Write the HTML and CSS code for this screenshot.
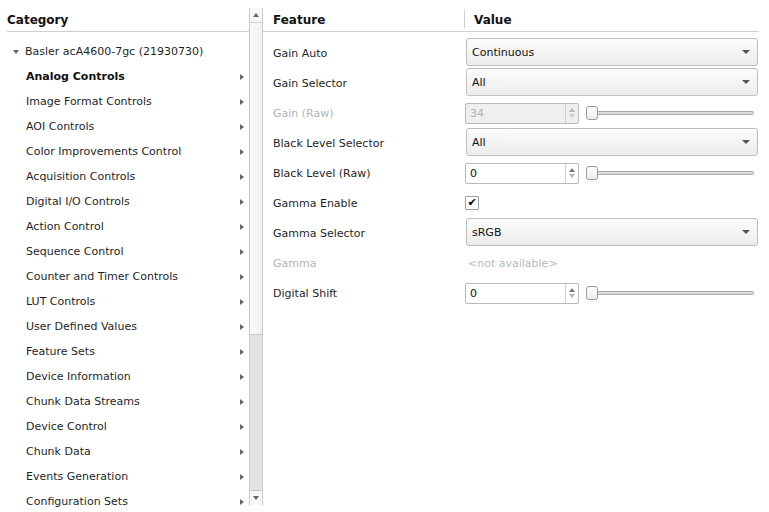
FILE: index.html
```html
<!DOCTYPE html>
<html>
<head>
<meta charset="utf-8">
<link rel="stylesheet" href="styles.css">
</head>
<body>
<div class="app">
  <div class="left">
    <div class="tree">
      <div class="hdr">Category</div>
      <ul class="items">
        <li class="item root"><span class="exp"></span>Basler acA4600-7gc (21930730)</li>
        <li class="item sel">Analog Controls<span class="arr"></span></li>
        <li class="item">Image Format Controls<span class="arr"></span></li>
        <li class="item">AOI Controls<span class="arr"></span></li>
        <li class="item">Color Improvements Control<span class="arr"></span></li>
        <li class="item">Acquisition Controls<span class="arr"></span></li>
        <li class="item">Digital I/O Controls<span class="arr"></span></li>
        <li class="item">Action Control<span class="arr"></span></li>
        <li class="item">Sequence Control<span class="arr"></span></li>
        <li class="item">Counter and Timer Controls<span class="arr"></span></li>
        <li class="item">LUT Controls<span class="arr"></span></li>
        <li class="item">User Defined Values<span class="arr"></span></li>
        <li class="item">Feature Sets<span class="arr"></span></li>
        <li class="item">Device Information<span class="arr"></span></li>
        <li class="item">Chunk Data Streams<span class="arr"></span></li>
        <li class="item">Device Control<span class="arr"></span></li>
        <li class="item">Chunk Data<span class="arr"></span></li>
        <li class="item">Events Generation<span class="arr"></span></li>
        <li class="item">Configuration Sets<span class="arr"></span></li>
      </ul>
    </div>
    <div class="vscroll">
      <div class="sbtn"><span class="up"></span></div>
      <div class="thumb"></div>
      <div class="track"></div>
      <div class="sbtn bottom"><span class="down"></span></div>
    </div>
  </div>
  <div class="right">
    <div class="thead">
      <div class="c1">Feature</div>
      <div class="c2">Value</div>
    </div>
    <div class="rows">
      <div class="row"><div class="lbl">Gain Auto</div><div class="val"><div class="combo">Continuous<span class="dd"></span></div></div></div>
      <div class="row"><div class="lbl">Gain Selector</div><div class="val"><div class="combo">All<span class="dd"></span></div></div></div>
      <div class="row"><div class="lbl dis">Gain (Raw)</div><div class="val"><div class="spin disabled"><span class="num">34</span><span class="arrows"><span class="su"></span><span class="sd"></span></span></div><div class="slider"><span class="handle"></span><span class="groove"></span></div></div></div>
      <div class="row"><div class="lbl">Black Level Selector</div><div class="val"><div class="combo">All<span class="dd"></span></div></div></div>
      <div class="row"><div class="lbl">Black Level (Raw)</div><div class="val"><div class="spin"><span class="num">0</span><span class="arrows"><span class="su"></span><span class="sd"></span></span></div><div class="slider"><span class="handle"></span><span class="groove"></span></div></div></div>
      <div class="row"><div class="lbl">Gamma Enable</div><div class="val"><div class="check">✔</div></div></div>
      <div class="row"><div class="lbl">Gamma Selector</div><div class="val"><div class="combo">sRGB<span class="dd"></span></div></div></div>
      <div class="row"><div class="lbl dis">Gamma</div><div class="val"><span class="na">&lt;not available&gt;</span></div></div>
      <div class="row"><div class="lbl">Digital Shift</div><div class="val"><div class="spin"><span class="num">0</span><span class="arrows"><span class="su"></span><span class="sd"></span></span></div><div class="slider"><span class="handle"></span><span class="groove"></span></div></div></div>
    </div>
  </div>
</div>
</body>
</html>
```

FILE: styles.css
```css
html, body {
  margin: 0;
  padding: 0;
  background: #ffffff;
}
body {
  font-family: "DejaVu Sans", "Liberation Sans", sans-serif;
  font-size: 11px;
  color: #1a1a1a;
  width: 769px;
  height: 512px;
  overflow: hidden;
}
.app {
  display: flex;
  height: 512px;
}
.left {
  display: flex;
  width: 263px;
  flex: none;
}
.tree {
  width: 249px;
  height: 512px;
  overflow: hidden;
}
.hdr {
  margin-left: 7px;
  padding-top: 11px;
  padding-bottom: 1px;
  line-height: 19px;
  font-size: 12px;
  font-weight: bold;
  color: #111;
  border-bottom: 1px solid #cfcfcf;
}
.items {
  list-style: none;
  margin: 0;
  padding: 7px 0 0 0;
}
.item {
  height: 25px;
  line-height: 25px;
  padding-left: 26px;
  display: flex;
  align-items: center;
  white-space: nowrap;
  color: #1f1f1f;
}
.item.sel {
  font-weight: bold;
  color: #111;
}
.item.root {
  padding-left: 13px;
}
.exp {
  width: 0;
  height: 0;
  border-left: 3.5px solid transparent;
  border-right: 3.5px solid transparent;
  border-top: 4px solid #666;
  margin-right: 6px;
}
.arr {
  margin-left: auto;
  margin-right: 5px;
  width: 0;
  height: 0;
  border-top: 3.5px solid transparent;
  border-bottom: 3.5px solid transparent;
  border-left: 4px solid #666;
}
.vscroll {
  width: 14px;
  box-sizing: border-box;
  margin-top: 8px;
  height: 497px;
  border-left: 1px solid #c9c9c9;
  border-right: 1px solid #c9c9c9;
  display: flex;
  flex-direction: column;
}
.sbtn {
  height: 15px;
  flex: none;
  display: flex;
  align-items: center;
  justify-content: center;
  background: #f7f7f7;
  border-bottom: 1px solid #d2d2d2;
  box-sizing: border-box;
}
.sbtn.bottom {
  border-bottom: none;
  border-top: 1px solid #c9c9c9;
}
.up {
  width: 0; height: 0;
  border-left: 3.5px solid transparent;
  border-right: 3.5px solid transparent;
  border-bottom: 4px solid #666;
}
.down {
  width: 0; height: 0;
  border-left: 3.5px solid transparent;
  border-right: 3.5px solid transparent;
  border-top: 4px solid #666;
}
.thumb {
  height: 312px;
  flex: none;
  background: linear-gradient(to right, #fafafa, #f1f1f1);
  border-bottom: 1px solid #c6c6c6;
  box-sizing: border-box;
}
.track {
  flex: 1;
  background: #e3e3e3;
}
.right {
  flex: 1;
  padding-right: 10px;
}
.thead {
  display: flex;
  align-items: flex-start;
  height: 31px;
  border-bottom: 1px solid #cfcfcf;
  font-size: 12px;
  font-weight: bold;
  color: #111;
  line-height: 19px;
}
.c1 {
  width: 201px;
  padding-left: 10px;
  padding-top: 11px;
  box-sizing: border-box;
}
.c2 {
  margin-top: 9px;
  height: 19px;
  box-sizing: border-box;
  padding-top: 2px;
  border-left: 1px solid #d0d0d0;
  padding-left: 9px;
}
.rows {
  padding-top: 6px;
}
.row {
  display: flex;
  height: 30px;
  align-items: center;
}
.lbl {
  width: 201px;
  padding-left: 10px;
  box-sizing: border-box;
  color: #1f1f1f;
}
.lbl.dis {
  color: #b3b3b3;
}
.val {
  flex: 1;
  display: flex;
  align-items: center;
  padding-left: 1px;
}
.combo {
  flex: 1;
  margin-left: 1px;
  margin-right: 1px;
  height: 28px;
  margin-bottom: 2px;
  box-sizing: border-box;
  border: 1px solid #bdbdbd;
  border-radius: 3px;
  background: linear-gradient(to bottom, #fcfcfc, #ececec);
  display: flex;
  align-items: center;
  padding-left: 5px;
  color: #111;
}
.dd {
  margin-left: auto;
  margin-right: 7px;
  width: 0; height: 0;
  border-left: 4px solid transparent;
  border-right: 4px solid transparent;
  border-top: 4px solid #555;
}
.spin {
  width: 114px;
  height: 21px;
  box-sizing: border-box;
  border: 1px solid #b9b9b9;
  border-radius: 2px;
  background: #fff;
  display: flex;
  align-items: stretch;
  color: #111;
}
.spin.disabled {
  background: #efefef;
  color: #b0b0b0;
}
.num {
  flex: 1;
  display: flex;
  align-items: center;
  padding-left: 4px;
}
.arrows {
  width: 12px;
  border-left: 1px solid #d0d0d0;
  display: flex;
  flex-direction: column;
  align-items: center;
  justify-content: center;
  gap: 2px;
}
.su {
  width: 0; height: 0;
  border-left: 3.5px solid transparent;
  border-right: 3.5px solid transparent;
  border-bottom: 4px solid #777;
}
.sd {
  width: 0; height: 0;
  border-left: 3.5px solid transparent;
  border-right: 3.5px solid transparent;
  border-top: 4px solid #b5b5b5;
}
.spin.disabled .su {
  border-bottom-color: #b8b8b8;
}
.spin.disabled .sd {
  border-top-color: #d0d0d0;
}
.slider {
  flex: 1;
  margin-left: 7px;
  margin-right: 5px;
  height: 14px;
  display: flex;
  align-items: center;
}
.handle {
  width: 12px;
  height: 14px;
  box-sizing: border-box;
  border: 1px solid #9a9a9a;
  border-radius: 3px;
  background: linear-gradient(to bottom, #ffffff, #ececec);
  flex: none;
}
.groove {
  flex: 1;
  height: 4px;
  box-sizing: border-box;
  border: 1px solid #a9a9a9;
  border-left: none;
  border-radius: 0 2px 2px 0;
  background: #dcdcdc;
}
.check {
  width: 14px;
  height: 14px;
  box-sizing: border-box;
  border: 1px solid #9f9f9f;
  border-radius: 1px;
  background: #fff;
  font-size: 11px;
  line-height: 12px;
  text-align: center;
  color: #000;
  font-weight: bold;
}
.na {
  color: #b8b8b8;
  padding-left: 3px;
}
```
